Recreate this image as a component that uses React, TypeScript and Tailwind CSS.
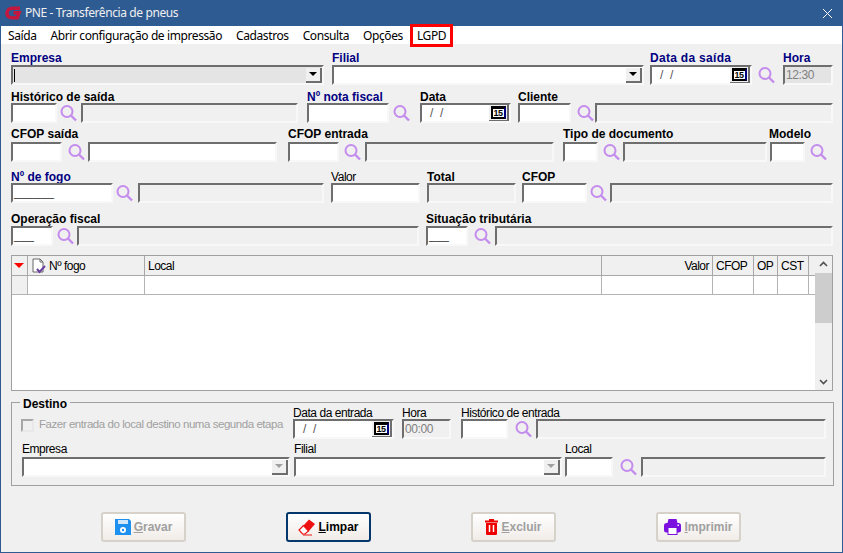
import React from 'react';
import { X } from 'lucide-react';

const sunken = 'border-2 border-t-[#6e6e6e] border-l-[#6e6e6e] border-r-[#f8f8f8] border-b-[#f8f8f8]';

const Lupa = ({ className = '' }: { className?: string }) => (
    <svg width="17" height="18" viewBox="0 0 17 18" className={`shrink-0 ${className}`} fill="none" stroke="#c48cec">
        <circle cx="7" cy="7.5" r="5.5" strokeWidth="2" />
        <path d="M11 11.5l5 5" strokeWidth="2.4" />
    </svg>
);

const Box = ({ className = '', disabled = false, mask, children }: { className?: string; disabled?: boolean; mask?: string; children?: React.ReactNode }) => (
    <div className={`h-[20px] shrink-0 flex items-center overflow-hidden text-[12px] ${sunken} ${disabled ? 'bg-[#f0f0f0]' : 'bg-white'} ${className}`}>
        {mask && <span className="pl-px h-full leading-[15px] text-[#444]">{mask}</span>}
        {children}
    </div>
);

const Cal = () => (
    <div className="ml-auto w-[20px] h-[18px] shrink-0 bg-[#f0f0f0] border-r-2 border-b-2 border-[#6e6e6e] flex items-center justify-center">
        <div className="w-[15px] h-[13px] bg-white border-2 border-t-[3px] border-black border-r-[#000080] text-[9px] leading-[8px] text-center text-black font-bold tracking-[-0.5px]">15</div>
    </div>
);

const DateBox = ({ className = '' }: { className?: string }) => (
    <Box className={className}>
        <span className="pl-2 text-[#555] whitespace-pre">/  /</span>
        <Cal />
    </Box>
);

const Drop = ({ disabled = false }: { disabled?: boolean }) => (
    <div className="ml-auto w-[16px] h-[15px] shrink-0 bg-[#f0f0f0] border-r-2 border-b-2 border-[#6e6e6e] flex items-center justify-center">
        <div className={`w-0 h-0 border-x-[4px] border-x-transparent border-t-[4px] ${disabled ? 'border-t-[#a0a0a0]' : 'border-t-black'}`} />
    </div>
);

interface FieldProps {
    label: string;
    color?: string;
    plain?: boolean;
    // the labels do not sit at the same distance from their inputs on every row
    labelClass?: string;
    className?: string;
    children: React.ReactNode;
}

const Field = ({ label, color = 'text-black', plain = false, labelClass = 'pt-px leading-[14px]', className = '', children }: FieldProps) => (
    <div className={`shrink-0 ${className}`}>
        <div className={`h-[14px] whitespace-nowrap text-[12px] ${plain ? 'tracking-[-0.45px]' : 'font-bold'} ${labelClass} ${color}`}>{label}</div>
        <div className="flex items-center">{children}</div>
    </div>
);

const columns = [
    { w: 'w-[16px]', label: '' },
    { w: 'w-[117px]', label: 'Nº fogo' },
    { w: 'w-[457px]', label: 'Local' },
    { w: 'w-[111px]', label: 'Valor' },
    { w: 'w-[41px]', label: 'CFOP' },
    { w: 'w-[24px]', label: 'OP' },
    { w: 'w-[31px]', label: 'CST' },
];

const GridHeader = () => (
    <div className="h-[20px] flex bg-[#f0f0f0] border-b border-[#a8a8a8] text-[12px] leading-[20px] tracking-[-0.5px] text-black">
        {columns.map((c, i) => (
            <div key={i} className={`${c.w} shrink-0 border-r border-[#a8a8a8] px-[3px] flex items-center ${c.label === 'Valor' ? 'justify-end' : ''}`}>
                {i === 0 && <div className="ml-[-1px] w-0 h-0 border-x-[5px] border-x-transparent border-t-[5px] border-t-[#ff0000]" />}
                {i === 1 && (
                    <svg width="16" height="16" viewBox="0 0 16 16" className="mr-[2px] shrink-0">
                        <path d="M2 1h7l3 3v10H2z" fill="#fff" stroke="#666" />
                        <path d="M9 1v3h3" fill="none" stroke="#666" />
                        <path d="M6 11l2.5 3L14 8" fill="none" stroke="#6b3fa0" strokeWidth="2" />
                    </svg>
                )}
                {c.label}
            </div>
        ))}
    </div>
);

const ActionButton = ({ label, mnemonic, icon, primary = false }: { label: string; mnemonic: string; icon: React.ReactNode; primary?: boolean }) => (
    <button className={`w-[85px] h-[30px] shrink-0 rounded-[3px] bg-gradient-to-b from-white to-[#f0ece8] flex items-center justify-center gap-[3px] text-[12px] font-bold ${primary ? 'border-2 border-[#04386c] text-black' : 'border-2 border-[#d6d2ca] text-[#a0a0a0]'}`}>
        {icon}
        <span><u>{mnemonic}</u>{label}</span>
    </button>
);

const App: React.FC = () => {
    return (
        <div className="w-[843px] h-[553px] overflow-hidden bg-[#f0f0f0] border-x border-b border-[#2f5b93] text-black" style={{ fontFamily: '"Liberation Sans", sans-serif' }}>
            {/* title bar */}
            <div className="h-[26px] bg-[#2f5b93] flex items-center pl-[3px] pr-[3px] text-[12px] tracking-[-0.4px] text-[#f0f0f0] -mx-px" style={{ fontFamily: '"Noto Sans", sans-serif' }}>
                <svg width="18" height="16" viewBox="0 0 18 16" className="ml-px mr-[3px]" fill="none">
                    <path d="M16 3.2H8.5C5.5 3.2 3 5.4 3 8.2c0 2.6 2 4.6 4.8 4.6h5.4l1.8-5H9.5" stroke="#c4173f" strokeWidth="3.6" />
                </svg>
                <span>PNE - Transferência de pneus</span>
                <X size={17} strokeWidth={1.4} className="ml-auto mr-[4px] text-white" />
            </div>

            {/* menu */}
            <div className="h-[18px] pt-px bg-white flex items-center text-[12px] leading-[17px] tracking-[-0.4px] -mx-px pl-[8px]" style={{ fontFamily: '"Noto Sans", sans-serif' }}>
                <span>Saída</span>
                <span className="ml-[14px] whitespace-nowrap">Abrir configuração de impressão</span>
                <span className="ml-[14px]">Cadastros</span>
                <span className="ml-[14px]">Consulta</span>
                <span className="ml-[14px]">Opções</span>
                <span className="ml-[14px] relative">
                    LGPD
                    <div className="absolute -left-[7px] -right-[7px] -top-[3px] -bottom-[3px] border-[3px] border-[#ff0000]" />
                </span>
            </div>

            {/* form */}
            <div className="pt-[7px] pl-[10px]">
                <div className="flex">
                    <Field label="Empresa" color="text-[#000080]" labelClass="leading-[14px]">
                        <Box className="w-[313px] !bg-[#e4e4e4]">
                            <div className="w-px h-[13px] bg-black ml-px" />
                            <Drop />
                        </Box>
                    </Field>
                    <Field label="Filial" color="text-[#000080]" labelClass="leading-[14px]" className="ml-[8px]">
                        <Box className="w-[312px]"><Drop /></Box>
                    </Field>
                    <Field label="Data da saída" color="text-[#000080]" labelClass="leading-[14px] tracking-[0.3px]" className="ml-[6px]">
                        <DateBox className="w-[102px]" />
                        <Lupa className="ml-[6px]" />
                    </Field>
                    <Field label="Hora" color="text-[#000080]" labelClass="leading-[14px]" className="ml-[8px]">
                        <Box disabled className="w-[50px] !bg-[#e4e4e4] text-[#808080] tracking-[-0.4px] pl-px">12:30</Box>
                    </Field>
                </div>

                <div className="flex mt-[4px]">
                    <Field label="Histórico de saída">
                        <Box className="w-[46px]" />
                        <Lupa className="ml-[3px]" />
                        <Box disabled className="ml-[4px] w-[217px]" />
                    </Field>
                    <Field label="Nº nota fiscal" color="text-[#000080]" className="ml-[9px]">
                        <Box className="w-[82px]" />
                        <Lupa className="ml-[4px]" />
                    </Field>
                    <Field label="Data" className="ml-[10px]">
                        <DateBox className="w-[91px]" />
                    </Field>
                    <Field label="Cliente" className="ml-[7px]">
                        <Box className="w-[53px]" />
                        <Lupa className="ml-[6px]" />
                        <Box disabled className="ml-px w-[238px]" />
                    </Field>
                </div>

                <div className="flex mt-[5px]">
                    <Field label="CFOP saída" labelClass="leading-[12px]">
                        <Box className="w-[51px]" />
                        <Lupa className="ml-[6px]" />
                        <Box className="ml-[3px] w-[189px]" />
                    </Field>
                    <Field label="CFOP entrada" labelClass="leading-[12px]" className="ml-[11px]">
                        <Box className="w-[51px]" />
                        <Lupa className="ml-[5px]" />
                        <Box disabled className="ml-[4px] w-[189px]" />
                    </Field>
                    <Field label="Tipo de documento" labelClass="leading-[12px]" className="ml-[9px]">
                        <Box className="w-[35px]" />
                        <Lupa className="ml-[5px]" />
                        <Box disabled className="ml-[3px] w-[144px]" />
                    </Field>
                    <Field label="Modelo" labelClass="leading-[12px] -ml-px" className="ml-[3px]">
                        <Box className="w-[35px]" />
                        <Lupa className="ml-[5px]" />
                    </Field>
                </div>

                <div className="flex mt-[7px]">
                    <Field label="Nº de fogo" color="text-[#000080]">
                        <Box className="w-[102px]" mask="______" />
                        <Lupa className="ml-[3px]" />
                        <Box disabled className="ml-[5px] w-[186px]" />
                    </Field>
                    <Field label="Valor" plain className="ml-[7px]">
                        <Box className="w-[89px]" />
                    </Field>
                    <Field label="Total" className="ml-[7px]">
                        <Box disabled className="w-[89px]" />
                    </Field>
                    <Field label="CFOP" className="ml-[6px]">
                        <Box className="w-[65px]" />
                        <Lupa className="ml-[3px]" />
                        <Box disabled className="ml-[3px] w-[223px]" />
                    </Field>
                </div>

                <div className="flex mt-[9px]">
                    <Field label="Operação fiscal" labelClass="leading-[14px]">
                        <Box className="w-[42px]" mask="___" />
                        <Lupa className="ml-[4px]" />
                        <Box disabled className="ml-[3px] w-[342px]" />
                    </Field>
                    <Field label="Situação tributária" labelClass="leading-[14px]" className="ml-[7px]">
                        <Box className="w-[42px]" mask="___" />
                        <Lupa className="ml-[6px]" />
                        <Box disabled className="ml-[4px] w-[338px]" />
                    </Field>
                </div>

                {/* grid */}
                <div className="mt-[9px] w-[822px] h-[136px] border border-[#a0a0a0] bg-white flex">
                    <div className="flex-1">
                        <GridHeader />
                        <div className="h-[19px] flex border-b border-[#b4b4b4]">
                            {columns.map((c, i) => (
                                <div key={i} className={`${c.w} shrink-0 border-r border-[#b4b4b4] ${i === 0 ? 'bg-[#f0f0f0]' : ''}`} />
                            ))}
                        </div>
                    </div>
                    <div className="w-[17px] bg-[#f0f0f0] flex flex-col items-center justify-between py-[5px] relative">
                        <svg width="9" height="6" viewBox="0 0 9 6" fill="none" stroke="#505050" strokeWidth="1.6"><path d="M1 5l3.5-3.5L8 5" /></svg>
                        <div className="absolute left-0 right-0 top-[17px] h-[50px] bg-[#cdcdcd]" />
                        <svg width="9" height="6" viewBox="0 0 9 6" fill="none" stroke="#505050" strokeWidth="1.6"><path d="M1 1l3.5 3.5L8 1" /></svg>
                    </div>
                </div>

                {/* destino */}
                <div className="relative mt-[11px] w-[823px] h-[84px] border border-[#a0a0a0] pt-[2px]">
                    <div className="absolute left-[8px] -top-[6px] px-[3px] bg-[#f0f0f0] text-[12px] font-bold leading-[14px]">Destino</div>
                    <div className="flex">
                        <div className="ml-[9px] w-[272px] shrink-0 flex items-center pt-[6px] text-[11.5px] tracking-[-0.45px] text-[#a0a0a0] whitespace-nowrap">
                            <div className="w-[13px] h-[13px] shrink-0 bg-[#f0f0f0] border-2 border-t-[#a8a8a8] border-l-[#a8a8a8] border-r-[#e8e8e8] border-b-[#e8e8e8] mr-[5px]" />
                            Fazer entrada do local destino numa segunda etapa
                        </div>
                        <Field label="Data da entrada" plain>
                            <DateBox className="w-[101px]" />
                        </Field>
                        <Field label="Hora" plain className="ml-[8px]">
                            <Box disabled className="w-[49px] text-[#808080] tracking-[-0.4px] pl-px">00:00</Box>
                        </Field>
                        <Field label="Histórico de entrada" plain className="ml-[10px]">
                            <Box className="w-[47px]" />
                            <Lupa className="ml-[7px]" />
                            <Box disabled className="ml-[4px] w-[290px]" />
                        </Field>
                    </div>
                    <div className="flex mt-[4px] ml-[10px]">
                        <Field label="Empresa" plain labelClass="leading-[12px]">
                            <Box className="w-[268px]"><Drop disabled /></Box>
                        </Field>
                        <Field label="Filial" plain labelClass="leading-[12px]" className="ml-[4px]">
                            <Box className="w-[268px]"><Drop disabled /></Box>
                        </Field>
                        <Field label="Local" plain labelClass="leading-[12px]" className="ml-[3px]">
                            <Box className="w-[48px]" />
                            <Lupa className="ml-[7px]" />
                            <Box disabled className="ml-[4px] w-[185px]" />
                        </Field>
                    </div>
                </div>

                {/* acoes */}
                <div className="flex gap-[100px] pl-[90px] mt-[26px]">
                    <ActionButton mnemonic="G" label="ravar" icon={
                        <svg width="16" height="16" viewBox="0 0 16 16">
                            <path d="M0 0h14l2 2v14H0z" fill="#1e90f0" />
                            <rect x="3" y="1" width="10" height="4" fill="#cfe6fb" />
                            <circle cx="8" cy="11" r="3" fill="#fff" />
                            <circle cx="8" cy="11" r="1.2" fill="#1e90f0" />
                        </svg>
                    } />
                    <ActionButton primary mnemonic="L" label="impar" icon={
                        <svg width="17" height="17" viewBox="0 0 17 17">
                            <path d="M5 7l6-6.5L17 5l-6.5 7.5z" fill="#ee1111" />
                            <path d="M5.5 6.5L1 11l3.5 4h2.5l3.5-3z" fill="#fff" stroke="#ee1111" strokeWidth="1.2" />
                            <path d="M5 16h9" stroke="#ee1111" />
                        </svg>
                    } />
                    <ActionButton mnemonic="E" label="xcluir" icon={
                        <svg width="13" height="16" viewBox="0 0 13 16">
                            <path d="M0 1.5h13V3.5H0z" fill="#ee0000" />
                            <path d="M4 0h5v2H4z" fill="#ee0000" />
                            <path d="M1 4h11v11.2l-.8.8H1.8L1 15.2z" fill="#ee0000" />
                            <path d="M4.5 6v7M8.5 6v7" stroke="#fff" strokeWidth="1.5" />
                        </svg>
                    } />
                    <ActionButton mnemonic="I" label="mprimir" icon={
                        <svg width="17" height="16" viewBox="0 0 17 16">
                            <path d="M3.5 4l1-4h8l1 4z" fill="#7b10e0" />
                            <rect x="0" y="4" width="17" height="9.5" rx="2.5" fill="#7b10e0" />
                            <rect x="4" y="8.5" width="9" height="7" fill="#fff" stroke="#7b10e0" />
                            <rect x="13.5" y="5.5" width="1.5" height="1.5" fill="#fff" />
                        </svg>
                    } />
                </div>
            </div>
        </div>
    );
};

export default App;
